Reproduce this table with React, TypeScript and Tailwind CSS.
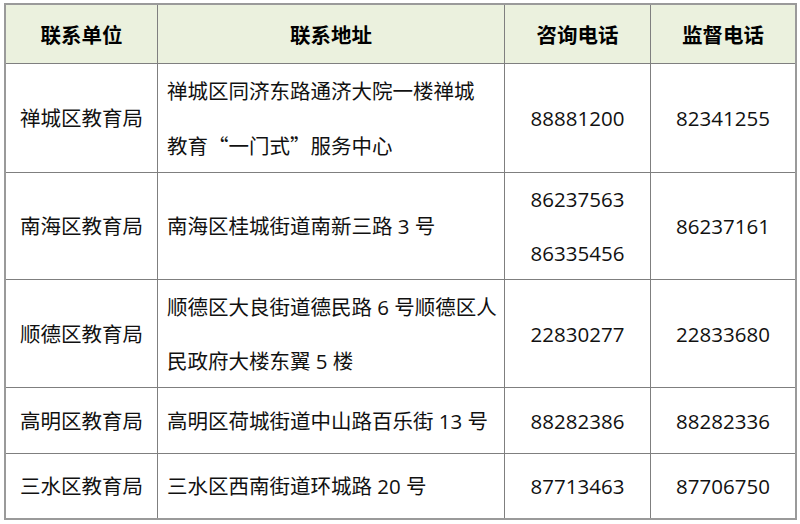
import React from "react";

const cjk = { fontFamily: '"Noto Sans CJK SC", sans-serif' };

function Q({ children }: { children: React.ReactNode }) {
  return <span style={cjk}>{children}</span>;
}

type Row = {
  unit: string;
  addr: React.ReactNode;
  consult: React.ReactNode;
  supervise: string;
};

const rows: Row[] = [
  {
    unit: "禅城区教育局",
    addr: (
      <>
        禅城区同济东路通济大院一楼禅城
        <br />
        教育<Q>“</Q>一门式<Q>”</Q>服务中心
      </>
    ),
    consult: "88881200",
    supervise: "82341255",
  },
  {
    unit: "南海区教育局",
    addr: "南海区桂城街道南新三路 3 号",
    consult: (
      <>
        86237563
        <br />
        86335456
      </>
    ),
    supervise: "86237161",
  },
  {
    unit: "顺德区教育局",
    addr: (
      <>
        顺德区大良街道德民路 6 号顺德区人
        <br />
        民政府大楼东翼 5 楼
      </>
    ),
    consult: "22830277",
    supervise: "22833680",
  },
  {
    unit: "高明区教育局",
    addr: "高明区荷城街道中山路百乐街 13 号",
    consult: "88282386",
    supervise: "88282336",
  },
  {
    unit: "三水区教育局",
    addr: "三水区西南街道环城路 20 号",
    consult: "87713463",
    supervise: "87706750",
  },
];

export default function App() {
  return (
    <div
      className="w-[800px] h-[524px] bg-white pt-[3px] pl-[4px] text-[#111] text-[20.5px]"
      style={{ fontFamily: '"Open Sans", "Noto Sans CJK SC", sans-serif' }}
    >
      <div className="grid w-[793px] grid-cols-[151px_346px_145px_144px] grid-rows-[58px_108px_106px_107px_65px_64px] gap-px bg-[#7f7f7f] border-2 border-[#9a9a9a] leading-[54px]">
        {["联系单位", "联系地址", "咨询电话", "监督电话"].map((h) => (
          <div
            key={h}
            className="bg-[#ebf1de] flex items-center justify-center font-bold text-black"
            style={cjk}
          >
            {h}
          </div>
        ))}
        {rows.map((r) => (
          <React.Fragment key={r.unit}>
            <div className="bg-white flex items-center justify-center">{r.unit}</div>
            <div className="bg-white flex items-center justify-start pl-[9px]">
              <div>{r.addr}</div>
            </div>
            <div className="bg-white flex items-center justify-center text-center">
              <div>{r.consult}</div>
            </div>
            <div className="bg-white flex items-center justify-center">{r.supervise}</div>
          </React.Fragment>
        ))}
      </div>
    </div>
  );
}
